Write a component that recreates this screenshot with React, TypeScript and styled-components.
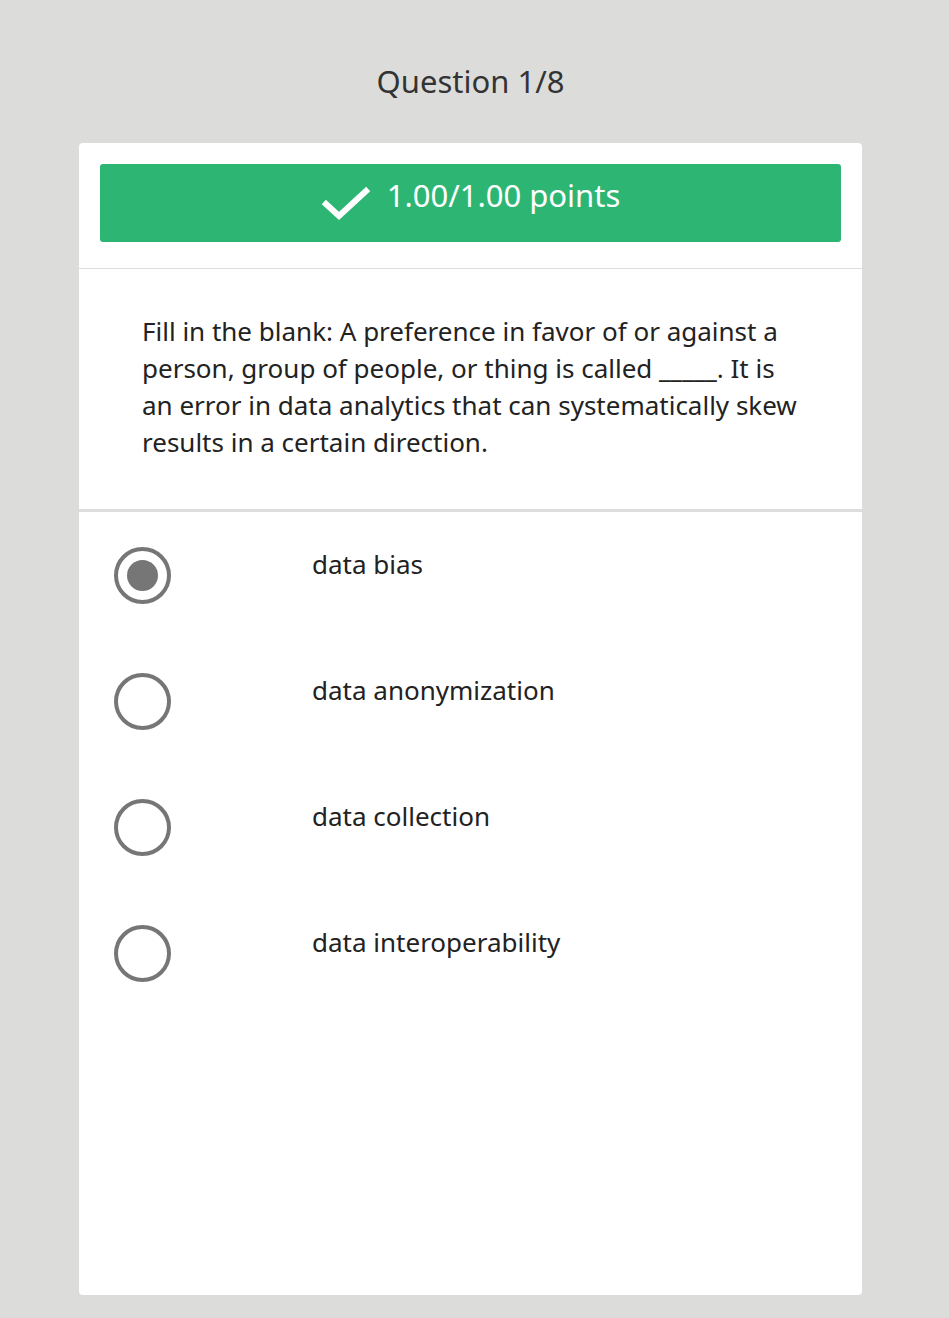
import styled, { createGlobalStyle } from 'styled-components';

const GlobalStyle = createGlobalStyle`
  body {
    margin: 0;
    background: #dcdcdb;
    font-family: "Noto Sans", "Open Sans", sans-serif;
  }
`;

const options = [
  { label: 'data bias', selected: true },
  { label: 'data anonymization', selected: false },
  { label: 'data collection', selected: false },
  { label: 'data interoperability', selected: false },
];

const App = () => {
  return (
    <>
      <GlobalStyle />
      <Page>
        <Title>Question 1/8</Title>
        <Card>
          <Header>
            <ScoreBar>
              <svg width="50" height="36" viewBox="0 0 50 36">
                <polyline
                  points="5,18 18,30 45,5"
                  fill="none"
                  stroke="#fff"
                  strokeWidth="6"
                  strokeLinecap="square"
                />
              </svg>
              <span>1.00/1.00 points</span>
            </ScoreBar>
          </Header>
          <QuestionText>
            Fill in the blank: A preference in favor of or against a person, group of people, or
            thing is called _____. It is an error in data analytics that can systematically skew
            results in a certain direction.
          </QuestionText>
          <OptionList>
            {options.map((o) => (
              <OptionRow key={o.label}>
                <Radio $selected={o.selected} />
                <OptionLabel>{o.label}</OptionLabel>
              </OptionRow>
            ))}
          </OptionList>
        </Card>
      </Page>
    </>
  );
};

const Page = styled.div`
  display: flex;
  flex-direction: column;
  padding: 61px 0 23px 79px;
`;

const Title = styled.div`
  width: 783px;
  text-align: center;
  font-size: 31px;
  line-height: 40px;
  color: #333;
  margin-bottom: 42px;
`;

const Card = styled.div`
  width: 783px;
  height: 1152px;
  background: #fff;
  border-radius: 4px;
  display: flex;
  flex-direction: column;
`;

const Header = styled.div`
  padding: 21px 21px 26px;
  border-bottom: 1px solid #dddddd;
`;

const ScoreBar = styled.div`
  height: 78px;
  background: #2db673;
  border-radius: 3px;
  display: flex;
  align-items: flex-start;
  justify-content: center;
  gap: 16px;
  color: #fff;
  font-size: 31px;
  line-height: 40px;
  padding-top: 11px;
  box-sizing: border-box;

  svg {
    margin-top: 11px;
  }
`;

const QuestionText = styled.div`
  padding: 44px 62px 48px 63px;
  font-size: 26px;
  line-height: 37px;
  color: #222;
  border-bottom: 3px solid #dddddd;
`;

const OptionList = styled.div`
  display: flex;
  flex-direction: column;
`;

const OptionRow = styled.div`
  height: 126px;
  box-sizing: border-box;
  padding: 35px 0 0 35px;
  display: flex;
  align-items: flex-start;
  gap: 141px;
`;

const Radio = styled.span<{ $selected: boolean }>`
  width: 57px;
  height: 57px;
  box-sizing: border-box;
  border: 4px solid #767676;
  border-radius: 50%;
  display: flex;
  align-items: center;
  justify-content: center;
  flex-shrink: 0;

  &::after {
    content: '';
    display: ${(p) => (p.$selected ? 'block' : 'none')};
    width: 31px;
    height: 31px;
    border-radius: 50%;
    background: #767676;
  }
`;

const OptionLabel = styled.div`
  font-size: 26px;
  line-height: 37px;
  color: #222;
  margin-top: -1px;
`;

export default App;
